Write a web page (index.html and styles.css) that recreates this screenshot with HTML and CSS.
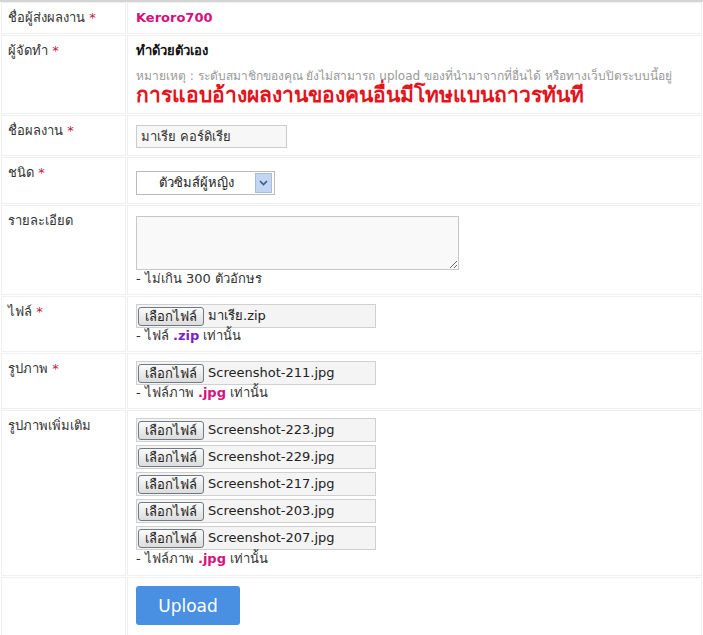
FILE: index.html
```html
<!DOCTYPE html>
<html>
<head>
    <meta charset="UTF-8">
    <title>ส่งผลงาน</title>
    <link rel="stylesheet" href="styles.css">
</head>
<body>
    <div class="form-wrap">
        <table class="form-table">
            <tr class="row-sender">
                <td class="label">ชื่อผู้ส่งผลงาน <span class="req">*</span></td>
                <td class="field"><span class="username">Keroro700</span></td>
            </tr>
            <tr class="row-maker">
                <td class="label">ผู้จัดทำ <span class="req">*</span></td>
                <td class="field">
                    <div class="maker">ทำด้วยตัวเอง</div>
                    <div class="note">หมายเหตุ : ระดับสมาชิกของคุณ ยังไม่สามารถ upload ของที่นำมาจากที่อื่นได้ หรือทางเว็บปิดระบบนี้อยู่</div>
                    <div class="warning">การแอบอ้างผลงานของคนอื่นมีโทษแบนถาวรทันที</div>
                </td>
            </tr>
            <tr class="row-name">
                <td class="label">ชื่อผลงาน <span class="req">*</span></td>
                <td class="field"><input type="text" class="text-input" value="มาเรีย คอร์ดิเรีย"></td>
            </tr>
            <tr class="row-type">
                <td class="label">ชนิด <span class="req">*</span></td>
                <td class="field">
                    <div class="select-box">
                        <span class="select-value">ตัวซิมส์ผู้หญิง</span>
                        <span class="select-arrow">
                            <svg width="9" height="6" viewBox="0 0 9 6"><path d="M1 1 L4.5 4.5 L8 1" fill="none" stroke="#3a5a8c" stroke-width="1.6"/></svg>
                        </span>
                    </div>
                </td>
            </tr>
            <tr class="row-detail">
                <td class="label">รายละเอียด</td>
                <td class="field">
                    <textarea class="text-area"></textarea>
                    <div class="hint">- ไม่เกิน 300 ตัวอักษร</div>
                </td>
            </tr>
            <tr class="row-file">
                <td class="label">ไฟล์ <span class="req">*</span></td>
                <td class="field">
                    <div class="file-box"><span class="file-btn">เลือกไฟล์</span><span class="file-name">มาเรีย.zip</span></div>
                    <div class="hint">- ไฟล์ <b class="ext-zip">.zip</b> เท่านั้น</div>
                </td>
            </tr>
            <tr class="row-file">
                <td class="label">รูปภาพ <span class="req">*</span></td>
                <td class="field">
                    <div class="file-box"><span class="file-btn">เลือกไฟล์</span><span class="file-name">Screenshot-211.jpg</span></div>
                    <div class="hint">- ไฟล์ภาพ <b class="ext-jpg">.jpg</b> เท่านั้น</div>
                </td>
            </tr>
            <tr class="row-more">
                <td class="label">รูปภาพเพิ่มเติม</td>
                <td class="field">
                    <div class="file-list">
                        <div class="file-box"><span class="file-btn">เลือกไฟล์</span><span class="file-name">Screenshot-223.jpg</span></div>
                        <div class="file-box"><span class="file-btn">เลือกไฟล์</span><span class="file-name">Screenshot-229.jpg</span></div>
                        <div class="file-box"><span class="file-btn">เลือกไฟล์</span><span class="file-name">Screenshot-217.jpg</span></div>
                        <div class="file-box"><span class="file-btn">เลือกไฟล์</span><span class="file-name">Screenshot-203.jpg</span></div>
                        <div class="file-box"><span class="file-btn">เลือกไฟล์</span><span class="file-name">Screenshot-207.jpg</span></div>
                    </div>
                    <div class="hint">- ไฟล์ภาพ <b class="ext-jpg">.jpg</b> เท่านั้น</div>
                </td>
            </tr>
            <tr class="row-submit">
                <td class="label"></td>
                <td class="field"><button class="upload-button">Upload</button></td>
            </tr>
        </table>
    </div>
</body>
</html>
```

FILE: styles.css
```css
body {
    margin: 0;
    padding: 0;
    background-color: #fff;
    font-family: Tahoma, "DejaVu Sans", "Noto Sans", sans-serif;
    font-size: 13px;
    line-height: 16px;
    color: #333;
}
.form-wrap {
    border-top: 2px solid #d4d4d4;
}
.form-table {
    width: 100%;
    border-collapse: separate;
    border-spacing: 1px;
    margin-top: -1px;
}
.form-table td {
    border: 1px solid #efefef;
    vertical-align: top;
    padding: 7px 8px 7px;
}
.form-table td.label {
    width: 109px;
    padding-left: 6px;
    white-space: nowrap;
}
.req {
    color: #c0213a;
}
.username {
    color: #d6117d;
    font-weight: bold;
}
.maker {
    font-weight: bold;
    color: #111;
    margin-bottom: 9px;
}
.note {
    color: #999;
    font-size: 12px;
}
.warning {
    color: #e2141c;
    font-weight: bold;
    font-size: 21px;
    line-height: 22px;
}
.row-name .field {
    padding-top: 9px;
}
.text-input {
    display: block;
    width: 151px;
    height: 23px;
    box-sizing: border-box;
    border: 1px solid #ccc;
    background-color: #f7f7f7;
    font-family: inherit;
    font-size: 13px;
    color: #333;
    padding: 0 4px;
    margin: 0;
}
.row-type .field {
    padding-top: 13px;
    padding-bottom: 8px;
}
.select-box {
    width: 139px;
    height: 24px;
    box-sizing: border-box;
    border: 1px solid #bbb;
    background-color: #fff;
    display: flex;
    align-items: center;
}
.select-value {
    flex: 1;
    text-align: center;
    color: #222;
}
.select-arrow {
    width: 15px;
    height: 18px;
    margin-right: 2px;
    background-color: #c2d6f2;
    border: 1px solid #a6bde0;
    display: flex;
    align-items: center;
    justify-content: center;
}
.row-detail .field {
    padding-top: 10px;
}
.text-area {
    display: block;
    width: 323px;
    height: 54px;
    box-sizing: border-box;
    border: 1px solid #c8c8c8;
    background-color: #f9f9f9;
    margin: 0 0 1px;
}
.hint {
    color: #333;
}
.ext-zip {
    color: #7a22c8;
}
.ext-jpg {
    color: #d6117d;
}
.file-list {
    display: flex;
    flex-direction: column;
    gap: 3px;
    margin-bottom: 1px;
}
.row-more .field {
    padding-bottom: 8px;
}
.file-box {
    width: 240px;
    height: 24px;
    box-sizing: border-box;
    border: 1px solid #d0d0d0;
    background-color: #f4f4f4;
    display: flex;
    align-items: center;
    padding-left: 1px;
}
.file-btn {
    height: 19px;
    box-sizing: border-box;
    border: 1px solid #6f7a86;
    border-radius: 3px;
    background: linear-gradient(#fbfbfb, #dcdcdc);
    padding: 0 6px;
    line-height: 17px;
    color: #222;
}
.file-name {
    margin-left: 4px;
    color: #222;
}
.row-submit .field {
    padding-top: 8px;
    padding-bottom: 14px;
}
.upload-button {
    display: block;
    width: 104px;
    height: 39px;
    border: none;
    border-radius: 3px;
    background-color: #4a90e2;
    color: #fff;
    font-family: inherit;
    font-size: 17px;
    cursor: pointer;
}
```
